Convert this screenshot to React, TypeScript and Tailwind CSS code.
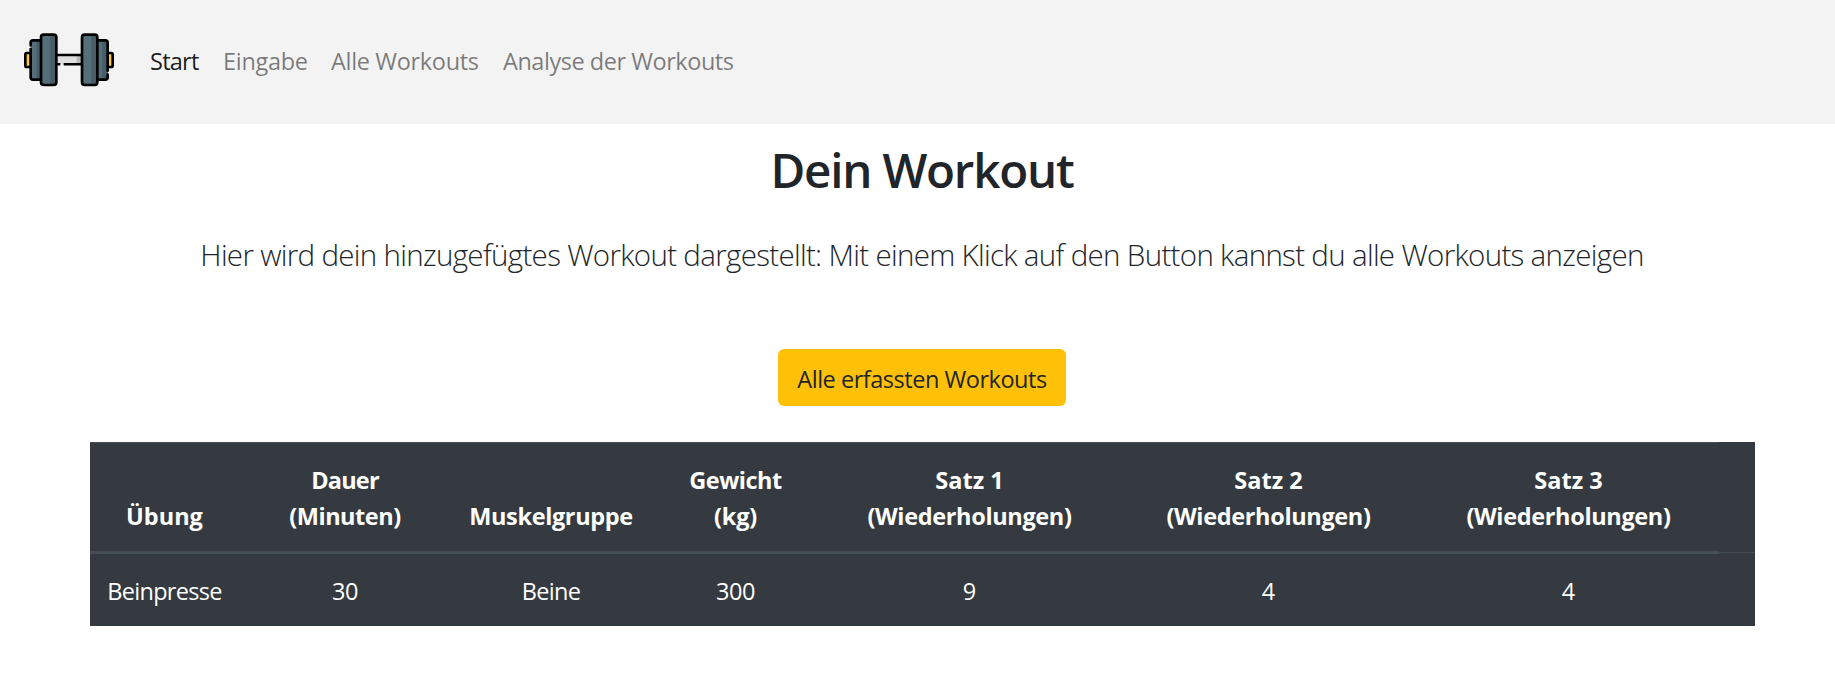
type NavItem = { label: string; className: string };

const navItems: NavItem[] = [
  { label: "Start", className: "w-[73px] text-black/90 tracking-[-0.75px]" },
  { label: "Eingabe", className: "w-[108px] text-black/50 tracking-[-0.3px]" },
  { label: "Alle Workouts", className: "w-[172px] text-black/50 tracking-[-0.33px]" },
  { label: "Analyse der Workouts", className: "text-black/50 tracking-[-0.46px]" },
];

type Column = { lines: string[]; value: string; width: string; tracking: string[]; valueTracking: string };

const columns: Column[] = [
  { lines: ["Übung"], value: "Beinpresse", width: "w-[149px]", tracking: ["tracking-normal"], valueTracking: "tracking-[-0.7px]" },
  { lines: ["Dauer", "(Minuten)"], value: "30", width: "w-[212px]", tracking: ["tracking-[-0.8px]", "tracking-[-0.46px]"], valueTracking: "tracking-[-0.4px]" },
  { lines: ["Muskelgruppe"], value: "Beine", width: "w-[200px]", tracking: ["tracking-[-0.37px]"], valueTracking: "tracking-[-0.7px]" },
  { lines: ["Gewicht", "(kg)"], value: "300", width: "w-[169px]", tracking: ["tracking-[-0.5px]", "tracking-[-0.15px]"], valueTracking: "tracking-[-0.4px]" },
  { lines: ["Satz 1", "(Wiederholungen)"], value: "9", width: "w-[299px]", tracking: ["tracking-normal", "tracking-[-0.35px]"], valueTracking: "tracking-normal" },
  { lines: ["Satz 2", "(Wiederholungen)"], value: "4", width: "w-[299px]", tracking: ["tracking-normal", "tracking-[-0.35px]"], valueTracking: "tracking-normal" },
  { lines: ["Satz 3", "(Wiederholungen)"], value: "4", width: "w-[301px]", tracking: ["tracking-normal", "tracking-[-0.35px]"], valueTracking: "tracking-normal" },
];

function Dumbbell() {
  return (
    <svg viewBox="42 -15 270 270" className="size-[90px] shrink-0" aria-hidden="true">
      <rect x="138" y="106" width="78" height="27" fill="#dfdfdf" />
      <rect x="200" y="106" width="16" height="27" fill="#b9b9b9" />
      <path d="M138 105H216M138 133H151M161 133H216" stroke="#000" strokeWidth="7.5" fill="none" />
      <rect x="46" y="99" width="17" height="42" rx="4" fill="#ffc843" stroke="#000" strokeWidth="8" />
      <rect x="291" y="99" width="17" height="42" rx="4" fill="#ffc843" stroke="#000" strokeWidth="8" />
      <rect x="62" y="61" width="32" height="118" rx="5" fill="#546e7a" />
      <rect x="80" y="63" width="12" height="114" fill="#475d68" />
      <path d="M62 76V68Q62 61 69 61H92M62 87V172Q62 179 69 179H92" stroke="#000" strokeWidth="8" fill="none" strokeLinecap="round" />
      <rect x="262" y="61" width="32" height="118" rx="5" fill="#546e7a" />
      <rect x="277" y="63" width="14" height="114" fill="#475d68" />
      <path d="M262 61H286Q293 61 293 68V152M293 164V172Q293 179 286 179H262" stroke="#000" strokeWidth="8" fill="none" strokeLinecap="round" />
      <rect x="93" y="44" width="46" height="151" rx="8" fill="#546e7a" />
      <rect x="121" y="46" width="16" height="147" fill="#475d68" />
      <rect x="93" y="44" width="46" height="151" rx="8" fill="none" stroke="#000" strokeWidth="8" />
      <rect x="216" y="44" width="46" height="151" rx="8" fill="#546e7a" />
      <rect x="244" y="46" width="16" height="147" fill="#475d68" />
      <rect x="216" y="44" width="46" height="151" rx="8" fill="none" stroke="#000" strokeWidth="8" />
    </svg>
  );
}

export default function App() {
  return (
    <div className="min-h-screen bg-white font-['Open_Sans',sans-serif] text-[23.5px] leading-[36px] text-[#212529]">
      <nav className="flex h-[124px] items-start bg-[#f3f3f3] pt-[15px] pl-6">
        <Dumbbell />
        <ul className="flex pt-7 pl-9">
          {navItems.map((item) => (
            <li key={item.label} className={`whitespace-nowrap ${item.className}`}>
              <a href="#">{item.label}</a>
            </li>
          ))}
        </ul>
      </nav>

      <main className="flex flex-col items-center pr-px pl-[10px]">
        <h1 className="mt-[17px] text-[47.5px] leading-[58px] font-semibold tracking-[-1.2px]">Dein Workout</h1>
        <p className="mt-[33px] text-[29.5px] leading-[45px] font-light tracking-[-0.68px] whitespace-nowrap">
          Hier wird dein hinzugefügtes Workout dargestellt: Mit einem Klick auf den Button kannst du alle Workouts anzeigen
        </p>
        <button className="mt-[72px] h-[57px] w-[288px] rounded-md bg-[#ffc107] pt-[3px] tracking-[-0.47px] whitespace-nowrap">
          Alle erfassten Workouts
        </button>

        <table className="mt-9 w-[1665px] table-fixed border-separate border-spacing-0 bg-[#343a40] text-center text-white">
          <thead>
            <tr>
              {columns.map((column) => (
                <th
                  key={column.lines.join(" ")}
                  className={`border-t border-b-3 border-[#454d55] pt-[19px] pr-0 pb-[17px] pl-px align-bottom font-bold ${column.width}`}
                >
                  {column.lines.map((line, i) => (
                    <span key={line} className={`block ${column.tracking[i]}`}>
                      {line}
                    </span>
                  ))}
                </th>
              ))}
              <td className="w-9 p-0 align-bottom">
                <div className="h-[2px] border-t border-[#454d55]" />
              </td>
            </tr>
          </thead>
          <tbody>
            <tr>
              {columns.map((column) => (
                <td key={column.lines.join(" ")} className={`pt-[19px] pr-0 pb-[17px] pl-px ${column.valueTracking}`}>
                  {column.value}
                </td>
              ))}
              <td />
            </tr>
          </tbody>
        </table>
      </main>
    </div>
  );
}
